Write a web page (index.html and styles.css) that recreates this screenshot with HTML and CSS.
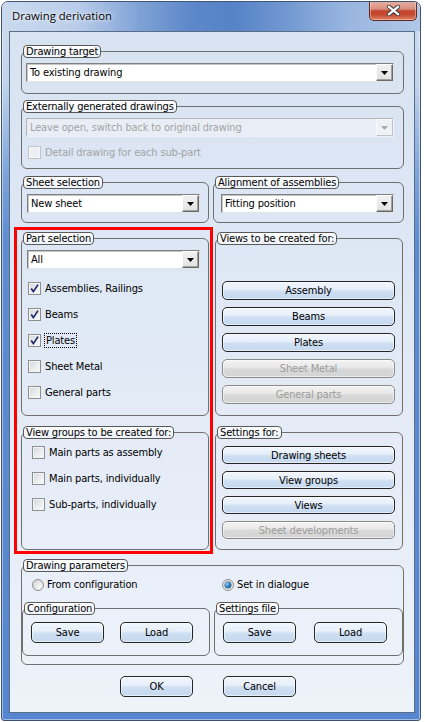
FILE: index.html
```html
<!DOCTYPE html>
<html>
<head>
<meta charset="utf-8">
<title>Drawing derivation</title>
<link rel="stylesheet" href="styles.css">
</head>
<body>
<div class="window">
  <div class="titlebar">
    <span class="title">Drawing derivation</span>
    <div class="close">
      <svg width="13" height="11" viewBox="0 0 13 11">
        <path d="M2 1.8 L11 9.2 M11 1.8 L2 9.2" stroke="#3a3a3a" stroke-width="4.2" stroke-linecap="square"/>
        <path d="M2 1.8 L11 9.2 M11 1.8 L2 9.2" stroke="#ffffff" stroke-width="2.2" stroke-linecap="square"/>
      </svg>
    </div>
  </div>
  <div class="client">
    <fieldset class="grp g-target">
      <legend>Drawing target</legend>
      <div class="body b-target">
        <div class="combo"><span class="val">To existing drawing</span><span class="drop"><svg width="7" height="4" viewBox="0 0 7 4"><path d="M0 0H7L3.5 4Z"/></svg></span></div>
      </div>
    </fieldset>

    <fieldset class="grp g-ext">
      <legend>Externally generated drawings</legend>
      <div class="body b-ext">
        <div class="combo disabled"><span class="val">Leave open, switch back to original drawing</span><span class="drop"><svg width="7" height="4" viewBox="0 0 7 4"><path d="M0 0H7L3.5 4Z"/></svg></span></div>
        <label class="chk disabled ext-chk"><span class="box"></span><span>Detail drawing for each sub-part</span></label>
      </div>
    </fieldset>

    <div class="row2">
      <fieldset class="grp g-sheet">
        <legend>Sheet selection</legend>
        <div class="body b-sheet">
          <div class="combo"><span class="val">New sheet</span><span class="drop"><svg width="7" height="4" viewBox="0 0 7 4"><path d="M0 0H7L3.5 4Z"/></svg></span></div>
        </div>
      </fieldset>
      <fieldset class="grp g-align">
        <legend>Alignment of assemblies</legend>
        <div class="body b-align">
          <div class="combo"><span class="val">Fitting position</span><span class="drop"><svg width="7" height="4" viewBox="0 0 7 4"><path d="M0 0H7L3.5 4Z"/></svg></span></div>
        </div>
      </fieldset>
    </div>

    <div class="mid">
      <div class="hl">
        <fieldset class="grp g-part">
          <legend>Part selection</legend>
          <div class="body b-part">
            <div class="combo"><span class="val">All</span><span class="drop"><svg width="7" height="4" viewBox="0 0 7 4"><path d="M0 0H7L3.5 4Z"/></svg></span></div>
            <div class="checks">
              <label class="chk"><span class="box"><svg width="11" height="11" viewBox="0 0 11 11"><path d="M2.2 5.4 L4.4 8.6 L9 1.6" fill="none" stroke="#1d2767" stroke-width="1.7"/></svg></span><span>Assemblies, Railings</span></label>
              <label class="chk"><span class="box"><svg width="11" height="11" viewBox="0 0 11 11"><path d="M2.2 5.4 L4.4 8.6 L9 1.6" fill="none" stroke="#1d2767" stroke-width="1.7"/></svg></span><span>Beams</span></label>
              <label class="chk"><span class="box"><svg width="11" height="11" viewBox="0 0 11 11"><path d="M2.2 5.4 L4.4 8.6 L9 1.6" fill="none" stroke="#1d2767" stroke-width="1.7"/></svg></span><span class="focus">Plates</span></label>
              <label class="chk"><span class="box"></span><span>Sheet Metal</span></label>
              <label class="chk"><span class="box"></span><span>General parts</span></label>
            </div>
          </div>
        </fieldset>
        <fieldset class="grp g-vgroups">
          <legend>View groups to be created for:</legend>
          <div class="body b-vgroups">
            <label class="chk"><span class="box"></span><span>Main parts as assembly</span></label>
            <label class="chk"><span class="box"></span><span>Main parts, individually</span></label>
            <label class="chk"><span class="box"></span><span>Sub-parts, individually</span></label>
          </div>
        </fieldset>
      </div>
      <div class="rcol">
        <fieldset class="grp g-views">
          <legend>Views to be created for:</legend>
          <div class="body b-views">
            <div class="btn">Assembly</div>
            <div class="btn">Beams</div>
            <div class="btn">Plates</div>
            <div class="btn disabled">Sheet Metal</div>
            <div class="btn disabled">General parts</div>
          </div>
        </fieldset>
        <fieldset class="grp g-settings">
          <legend>Settings for:</legend>
          <div class="body b-settings">
            <div class="btn">Drawing sheets</div>
            <div class="btn">View groups</div>
            <div class="btn">Views</div>
            <div class="btn disabled">Sheet developments</div>
          </div>
        </fieldset>
      </div>
    </div>

    <fieldset class="grp g-params">
      <legend>Drawing parameters</legend>
      <div class="body b-params">
        <div class="radios">
          <label class="rad r-first"><span class="circle"></span><span>From configuration</span></label>
          <label class="rad"><span class="circle on"><span class="dot"></span></span><span>Set in dialogue</span></label>
        </div>
        <div class="subrow">
          <fieldset class="grp g-config">
            <legend>Configuration</legend>
            <div class="body b-pair">
              <div class="btn big">Save</div>
              <div class="btn big">Load</div>
            </div>
          </fieldset>
          <fieldset class="grp g-file">
            <legend>Settings file</legend>
            <div class="body b-pair b-pair2">
              <div class="btn big">Save</div>
              <div class="btn big">Load</div>
            </div>
          </fieldset>
        </div>
      </div>
    </fieldset>

    <div class="actions">
      <div class="btn big">OK</div>
      <div class="btn big">Cancel</div>
    </div>
  </div>
</div>
</body>
</html>
```
FILE: styles.css
```css
* { box-sizing: border-box; }
html, body { margin: 0; padding: 0; background: #ffffff; }
body {
  font-family: "DejaVu Sans Condensed", "DejaVu Sans", sans-serif;
  font-size: 11px;
  letter-spacing: -0.15px;
  color: #000;
}

.window {
  margin: 1px 0 0 1px;
  width: 420px;
  height: 720px;
  border: 1px solid #3d5373;
  border-radius: 7px 7px 3px 3px;
  background: linear-gradient(180deg, #cfdcee 0px, #c2d4eb 80px, #7ea5da 170px, #5d8cd1 240px, #5686cf 100%);
  box-shadow: inset 0 0 0 1px rgba(255,255,255,0.45);
  overflow: hidden;
}

.titlebar {
  height: 29px;
  display: flex;
  justify-content: space-between;
  align-items: flex-start;
  background: linear-gradient(90deg, #cad9ee 0%, #b9cdea 18%, #7fa2d6 33%, #5d88c9 45%, #5683c7 55%, #6c94cf 66%, #98b5e0 82%, #b0c7e7 100%);
}
.title {
  font-family: "Open Sans", "Noto Sans", sans-serif;
  font-size: 11.3px;
  letter-spacing: 0;
  margin: 7px 0 0 10px;
  line-height: 14px;
  text-shadow: 0 0 6px rgba(255,255,255,0.9), 0 0 3px rgba(255,255,255,0.8);
}
.close {
  width: 48px;
  height: 20px;
  margin: -1px 3px 0 0;
  border: 1px solid #5e2a22;
  border-top: none;
  border-radius: 0 0 5px 5px;
  background: linear-gradient(180deg, #e7b0a3 0%, #d99080 42%, #c4462f 52%, #c4492f 72%, #dc8468 100%);
  box-shadow: inset 0 0 0 1px rgba(255,225,215,0.45);
  display: flex;
  align-items: center;
  justify-content: center;
}
.close svg { display: block; }

.client {
  margin: 0 5px 0 7px;
  height: 682px;
  border: 1px solid #5b6c86;
  background: linear-gradient(180deg, #d8e3f2 0%, #dfe8f5 40%, #e8eef8 75%, #eef3fa 100%);
  padding: 13px 10px 0 11px;
}

/* group boxes */
.grp {
  margin: 0;
  padding: 0;
  min-width: 0;
  border: 1px solid #6f6f6f;
  border-radius: 6px;
}
.grp > legend {
  margin-left: 1px;
  padding: 0 2px;
  height: 13px;
  line-height: 11px;
  border: 1px solid #585858;
  border-radius: 4px;
  background: linear-gradient(180deg, #ffffff 0%, #eef3fa 100%);
  white-space: nowrap;
}

.body { display: flex; flex-direction: column; }

.b-target { padding: 5px 9px 11px 4px; }
.g-ext { margin-top: 6px; }
.b-ext { padding: 5px 9px 9px 4px; }
.ext-chk { margin: 9px 0 0 2px; }

.row2 { display: flex; gap: 4px; margin-top: 7px; }
.g-sheet { width: 188px; }
.g-align { flex: 1; }
.b-sheet { padding: 5px 8px 9px 5px; }
.b-align { padding: 5px 9px 9px 7px; }

/* middle area */
.mid { display: flex; align-items: flex-start; margin: 4px 0 0 -7px; }
.hl {
  width: 199px;
  border: 3px solid #ff0000;
  padding: 2px 1px 1px 4px;
}
.rcol { width: 188px; margin-left: 2px; padding-top: 5px; }

.b-part { padding: 5px 8px 16px 5px; }
.checks { display: flex; flex-direction: column; gap: 13px; margin-top: 13px; padding-left: 1px; }
.g-vgroups { margin-top: 10px; }
.b-vgroups { padding: 7px 8px 38px 10px; gap: 13px; }

.b-views { padding: 36px 7px 11px 6px; gap: 7px; }
.g-settings { margin-top: 10px; }
.b-settings { padding: 7px 7px 10px 6px; gap: 7px; }
.b-settings .btn { height: 18px; }

/* drawing params */
.g-params { margin-top: 5px; }
.b-params { padding: 6px 0 8px 0; }
.radios { display: flex; padding-left: 10px; }
.r-first { width: 190px; }
.subrow { display: flex; gap: 4px; margin-top: 11px; }
.g-config { width: 188px; }
.g-file { flex: 1; }
.b-pair { flex-direction: row; padding: 7px 0 12px 8px; gap: 16px; }
.b-pair2 { gap: 18px; }

.actions { display: flex; gap: 30px; margin-top: 11px; padding-left: 99px; }

/* combo */
.combo {
  height: 19px;
  display: flex;
  background: #ffffff;
  border: 1px solid;
  border-color: #7f7f7f #e3e3e3 #e3e3e3 #7f7f7f;
  box-shadow: inset 1px 1px 0 #c6c6c6;
}
.combo .val { flex: 1; padding-left: 3px; line-height: 17px; white-space: nowrap; overflow: hidden; }
.combo .drop {
  width: 17px;
  height: 17px;
  border: 1px solid;
  border-color: #ffffff #6b6b6b #6b6b6b #ffffff;
  background: linear-gradient(180deg, #f1f1f1, #e2e2e2);
  box-shadow: inset -1px -1px 0 #a0a0a0;
  display: flex;
  align-items: center;
  justify-content: center;
}
.combo .drop svg { display: block; fill: #000; }
.combo.disabled { background: #e9eef6; border-color: #b4b4b4 #eef1f6 #eef1f6 #b4b4b4; box-shadow: none; color: #a3a3a3; }
.combo.disabled .drop { background: #eef1f5; border-color: #fafafa #c2c2c2 #c2c2c2 #fafafa; box-shadow: none; }
.combo.disabled .drop svg { fill: #a8a8a8; }

/* checkbox */
.chk { display: flex; align-items: center; height: 13px; gap: 4px; white-space: nowrap; }
.box {
  width: 13px;
  height: 13px;
  flex: none;
  border: 1px solid #8e8f8f;
  background: linear-gradient(135deg, #d3d6da 0%, #eceef0 60%, #fbfbfb 100%);
  box-shadow: inset 0 0 0 1px #f4f4f4;
}
.box svg { display: block; }
.chk.disabled { color: #a3a3a3; }
.chk.disabled .box { border-color: #c2c4c7; background: #eceef1; box-shadow: inset 0 0 0 1px #f7f7f7; }
.focus { outline: 1px dotted #000; outline-offset: 0; padding: 0 1px; line-height: 13px; }

/* radio */
.rad { display: flex; align-items: center; height: 13px; gap: 3px; white-space: nowrap; }
.circle {
  width: 12px;
  height: 12px;
  flex: none;
  border-radius: 50%;
  border: 1px solid #8e8f8f;
  background: radial-gradient(circle at 65% 70%, #f8f8f8 0%, #dcdcdc 70%, #cfcfcf 100%);
  display: flex;
  align-items: center;
  justify-content: center;
}
.circle.on { background: radial-gradient(circle at 60% 65%, #f6f6f6, #dadada); }
.dot {
  width: 6px;
  height: 6px;
  border-radius: 50%;
  background: radial-gradient(circle at 35% 35%, #a8dcfa 0%, #2a7fc4 45%, #0c3f75 100%);
  box-shadow: 0 0 0 0.5px #1c4c80;
}

/* buttons */
.btn {
  height: 19px;
  display: flex;
  align-items: center;
  justify-content: center;
  border: 1px solid #252525;
  border-radius: 5px;
  background: linear-gradient(180deg, #f1f6fc 0%, #e7eff9 42%, #cfdff3 55%, #c4d8ef 100%);
  box-shadow: inset 0 0 0 1px rgba(255,255,255,0.55);
  white-space: nowrap;
}
.btn.big { width: 73px; height: 21px; flex: none; }
.btn.disabled {
  border-color: #8a8a8a;
  color: #9c9c9c;
  background: linear-gradient(180deg, #f3f3f3 0%, #e9e9e9 42%, #d8d8d8 55%, #d4d4d4 100%);
}
```
